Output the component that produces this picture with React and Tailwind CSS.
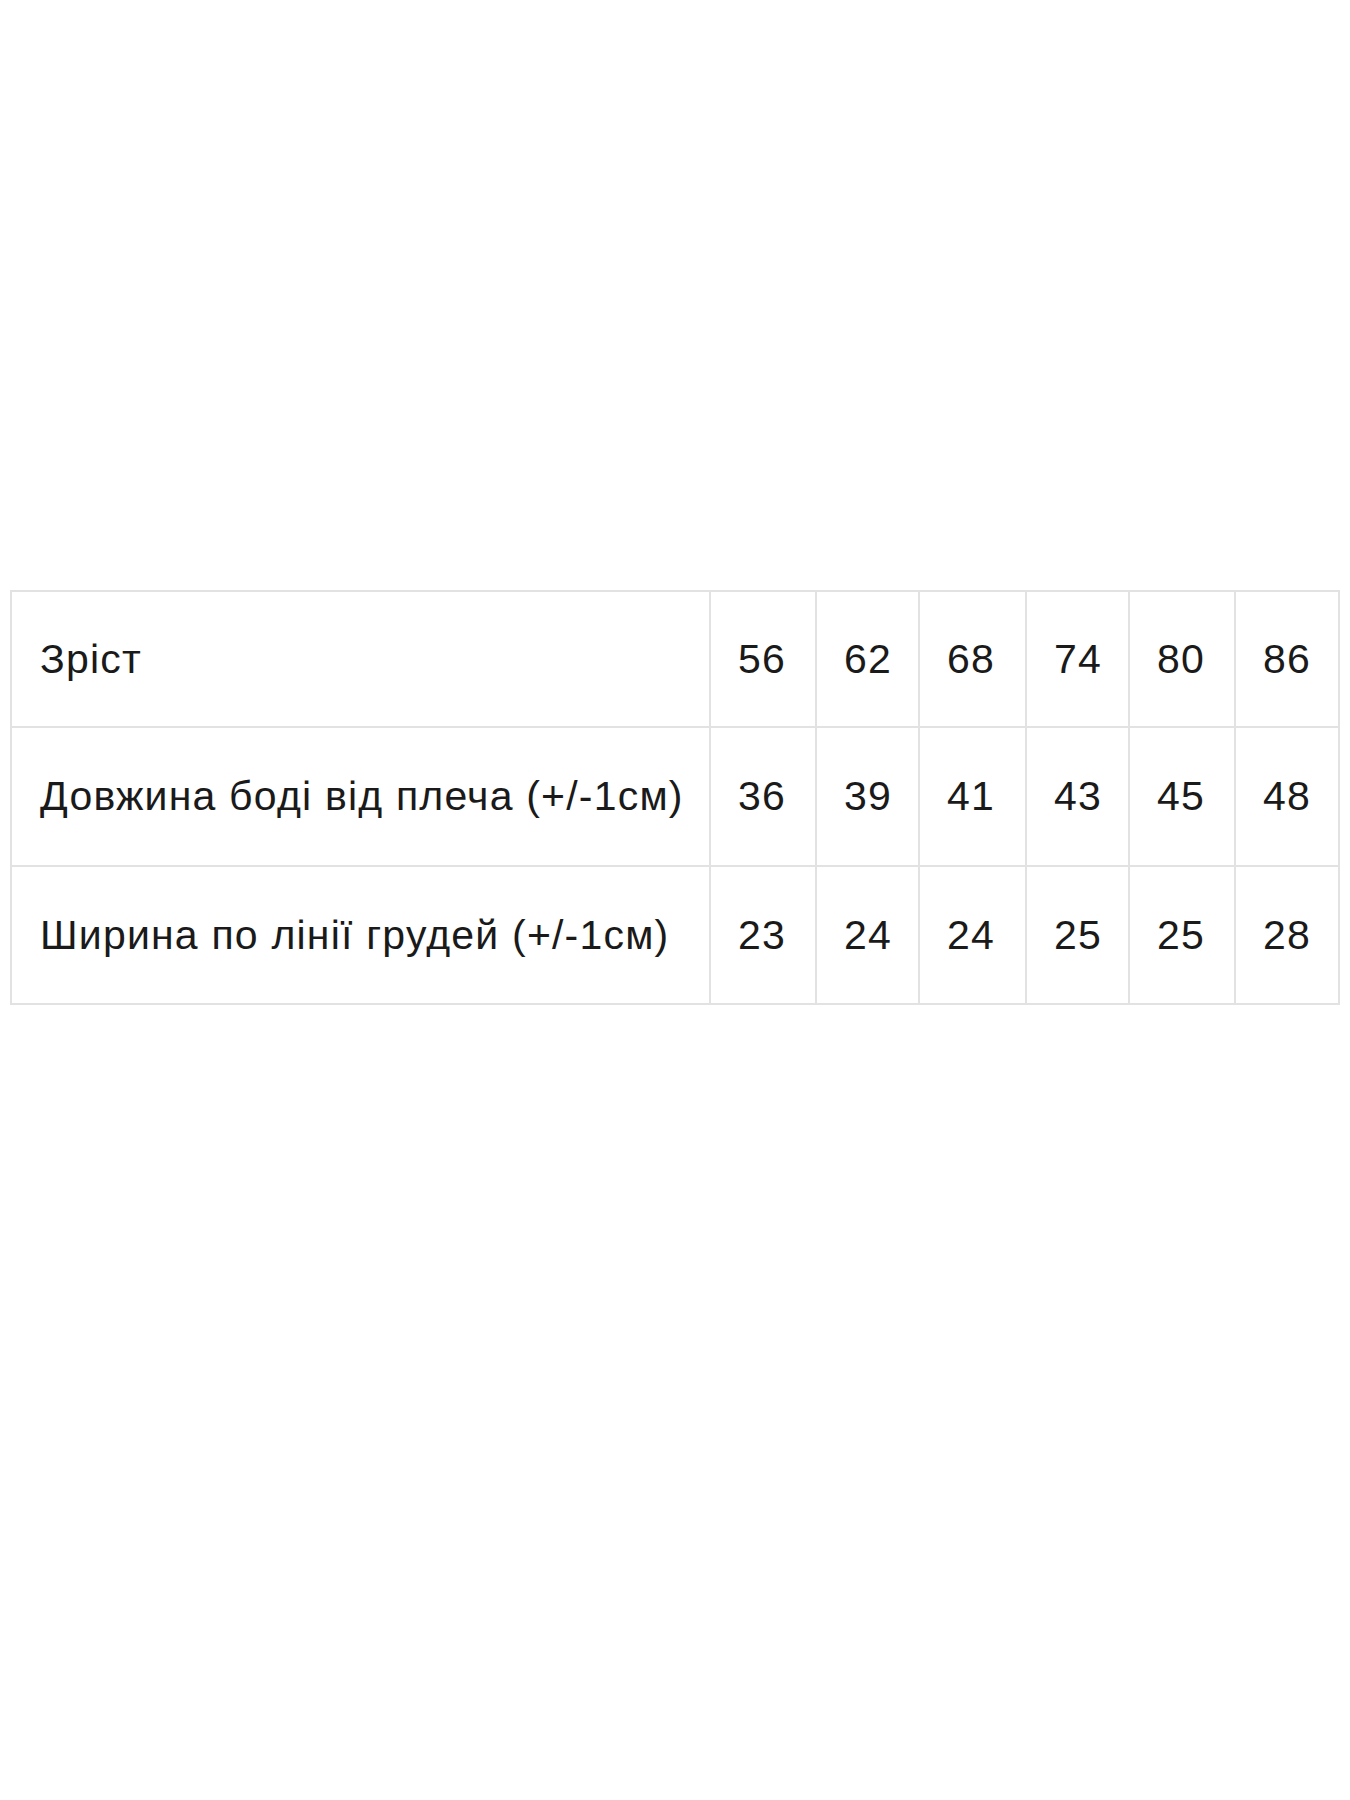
const sizes = [
    { label: 'Зріст', values: [56, 62, 68, 74, 80, 86], h: 'h-[136px]' },
    { label: 'Довжина боді від плеча (+/-1см)', values: [36, 39, 41, 43, 45, 48], h: 'h-[139px]' },
    { label: 'Ширина по лінії грудей (+/-1см)', values: [23, 24, 24, 25, 25, 28], h: 'h-[138px]' },
];

const colWidths = ['w-[106px]', 'w-[103px]', 'w-[107px]', 'w-[103px]', 'w-[106px]', 'w-[104px]'];

const App = () => {
    return (
        <div className="min-h-[1800px] w-[1350px] bg-white pt-[590px] pl-[10px]" style={{ fontFamily: '"Liberation Sans", Arial, sans-serif' }}>
            <table className="border-collapse text-[41px] leading-none tracking-[1.2px] text-[#1a1a1a]">
                <colgroup>
                    <col className="w-[699px]" />
                    {colWidths.map((w, i) => (
                        <col key={i} className={w} />
                    ))}
                </colgroup>
                <tbody>
                    {sizes.map((row) => (
                        <tr key={row.label} className={row.h}>
                            <td className="border-2 border-[#e2e2e2] pl-[28px] pr-0 whitespace-nowrap align-middle">
                                {row.label}
                            </td>
                            {row.values.map((v, i) => (
                                <td key={i} className="border-2 border-[#e2e2e2] pl-[27px] align-middle">
                                    {v}
                                </td>
                            ))}
                        </tr>
                    ))}
                </tbody>
            </table>
        </div>
    );
};

export default App;
